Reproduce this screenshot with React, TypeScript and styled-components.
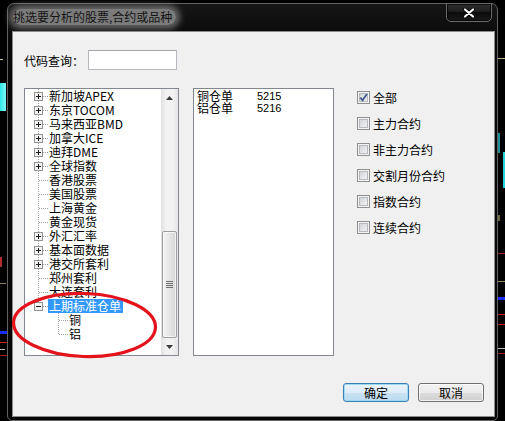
import styled, { createGlobalStyle } from "styled-components";

type Expander = "plus" | "minus" | null;

interface TreeItem {
  label: string;
  level: number;
  expander: Expander;
  selected?: boolean;
}

const treeItems: TreeItem[] = [
  { label: "新加坡APEX", level: 0, expander: "plus" },
  { label: "东京TOCOM", level: 0, expander: "plus" },
  { label: "马来西亚BMD", level: 0, expander: "plus" },
  { label: "加拿大ICE", level: 0, expander: "plus" },
  { label: "迪拜DME", level: 0, expander: "plus" },
  { label: "全球指数", level: 0, expander: "plus" },
  { label: "香港股票", level: 0, expander: null },
  { label: "美国股票", level: 0, expander: null },
  { label: "上海黄金", level: 0, expander: null },
  { label: "黄金现货", level: 0, expander: null },
  { label: "外汇汇率", level: 0, expander: "plus" },
  { label: "基本面数据", level: 0, expander: "plus" },
  { label: "港交所套利", level: 0, expander: "plus" },
  { label: "郑州套利", level: 0, expander: null },
  { label: "大连套利", level: 0, expander: null },
  { label: "上期标准仓单", level: 0, expander: "minus", selected: true },
  { label: "铜", level: 1, expander: null },
  { label: "铝", level: 1, expander: null },
];

const listItems = [
  { name: "铜仓单", code: "5215" },
  { name: "铝仓单", code: "5216" },
];

const options = [
  { label: "全部", checked: true },
  { label: "主力合约", checked: false },
  { label: "非主力合约", checked: false },
  { label: "交割月份合约", checked: false },
  { label: "指数合约", checked: false },
  { label: "连续合约", checked: false },
];

const GlobalStyle = createGlobalStyle`
  html, body {
    margin: 0;
    padding: 0;
    background: #000;
  }
  body {
    font-family: "Noto Sans CJK SC", "Liberation Sans", sans-serif;
    font-size: 12px;
  }
`;

const Page = styled.div`
  position: relative;
  display: flex;
  width: 505px;
  height: 421px;
  overflow: hidden;
  background: #000;
`;

const Strip = styled.div<{ $w: number }>`
  flex: none;
  width: ${p => p.$w}px;
  height: 421px;
  display: flex;
`;

const Frame = styled.div`
  flex: none;
  margin-top: 3px;
  width: 491px;
  height: 418px;
  box-sizing: border-box;
  border: 1px solid #626262;
  border-radius: 7px 7px 5px 5px;
  background: linear-gradient(#161616, #070707 40px, #050505);
  display: flex;
  flex-direction: column;
  padding: 0 2px 3px 4px;
`;

const TitleBar = styled.div`
  height: 27px;
  display: flex;
  align-items: flex-start;
  justify-content: space-between;
`;

const Title = styled.div`
  margin: 5px 0 0 1px;
  padding: 0 4px 0 0;
  height: 16px;
  font-size: 12px;
  line-height: 16px;
  color: #141414;
  white-space: nowrap;
  border-radius: 8px;
  background: rgba(150, 150, 150, 0.8);
  box-shadow: 0 0 6px 4px rgba(140, 140, 140, 0.7);
`;

const CloseButton = styled.div`
  margin-top: -1px;
  margin-right: 3px;
  width: 46px;
  height: 19px;
  box-sizing: border-box;
  border: 1px solid #6a6a6a;
  border-radius: 0 0 5px 5px;
  background: linear-gradient(#2e2e2e, #1c1c1c 50%, #0c0c0c 50%, #181818);
  box-shadow: inset 0 0 0 1px rgba(0, 0, 0, 0.7);
  display: flex;
  align-items: center;
  justify-content: center;
`;

const Client = styled.div`
  flex: 1;
  background: #f0f0f0;
  border: 1px solid #8c8c8c;
  display: flex;
  flex-direction: column;
  padding: 18px 10px 0 11px;
`;

const QueryRow = styled.div`
  display: flex;
  align-items: center;
  height: 20px;
`;

const QueryLabel = styled.span`
  width: 64px;
  font-size: 12px;
  color: #000;
`;

const QueryInput = styled.div`
  width: 89px;
  height: 20px;
  box-sizing: border-box;
  border: 1px solid #b5b8bf;
  border-top-color: #a3a6ad;
  background: #fff;
`;

const MainRow = styled.div`
  display: flex;
  margin-top: 18px;
  height: 268px;
`;

const TreeBox = styled.div`
  width: 155px;
  height: 268px;
  box-sizing: border-box;
  border: 1px solid #828790;
  background: #fff;
  display: flex;
`;

const TreeList = styled.div`
  flex: 1;
  overflow: hidden;
  padding-left: 3px;
`;

const TreeRow = styled.div`
  display: flex;
  align-items: center;
  height: 14px;
`;

const TreeLabel = styled.span<{ $selected: boolean }>`
  height: 14px;
  line-height: 14px;
  padding: 0 2px 0 1px;
  font-size: 12px;
  white-space: nowrap;
  color: ${p => (p.$selected ? "#fff" : "#000")};
  background: ${p => (p.$selected ? "#3399ff" : "transparent")};
`;

const ScrollBar = styled.div`
  width: 17px;
  display: flex;
  flex-direction: column;
  background: linear-gradient(90deg, #e2e2e2, #f2f2f2 30%, #f2f2f2 70%, #e6e6e6);
`;

const ScrollButton = styled.div`
  height: 17px;
  display: flex;
  align-items: center;
  justify-content: center;
`;

const ScrollTrack = styled.div`
  flex: 1;
`;

const Thumb = styled.div`
  height: 107px;
  margin: 0 1px;
  box-sizing: border-box;
  border: 1px solid #9d9d9d;
  border-radius: 2px;
  background: linear-gradient(90deg, #f3f3f3, #e6e6e6 50%, #d5d5d5);
  box-shadow: inset 0 0 0 1px rgba(255, 255, 255, 0.7);
  display: flex;
  align-items: center;
  justify-content: center;
`;

const ListBox = styled.div`
  margin-left: 14px;
  width: 141px;
  height: 268px;
  box-sizing: border-box;
  border: 1px solid #828790;
  background: #fff;
  padding: 1px 0 0 3px;
`;

const ListRow = styled.div`
  display: flex;
  height: 12px;
  line-height: 12px;
  color: #000;
`;

const ListName = styled.span`
  width: 60px;
  font-size: 12px;
`;

const ListCode = styled.span`
  font-family: "Liberation Sans", sans-serif;
  font-size: 11px;
`;

const Options = styled.div`
  margin-left: 23px;
  padding-top: 3px;
  display: flex;
  flex-direction: column;
`;

const Option = styled.div`
  display: flex;
  align-items: center;
  height: 13px;
  margin-bottom: 13px;
`;

const CheckOuter = styled.span`
  flex: none;
  width: 13px;
  height: 13px;
  box-sizing: border-box;
  border: 1px solid #8e8f8f;
  background: #f4f4f4;
  padding: 1px;
  display: flex;
`;

const CheckInner = styled.span`
  flex: 1;
  box-sizing: border-box;
  border: 1px solid #b6b9bd;
  background: linear-gradient(135deg, #d2d5d9, #f1f1f1);
  display: flex;
  align-items: center;
  justify-content: center;
`;

const OptionLabel = styled.span`
  margin-left: 3px;
  font-size: 12px;
  line-height: 13px;
  color: #000;
`;

const ButtonRow = styled.div`
  display: flex;
  justify-content: flex-end;
  gap: 9px;
  margin-top: 27px;
`;

const Button = styled.div<{ $default?: boolean }>`
  width: 66px;
  height: 19px;
  box-sizing: border-box;
  border-radius: 3px;
  border: 1px solid ${p => (p.$default ? "#3c7fb1" : "#707070")};
  background: ${p =>
    p.$default
      ? "linear-gradient(#eaf4fc 0%, #dcecf8 50%, #c9e2f4 50%, #bcdaf0 100%)"
      : "linear-gradient(#f2f2f2 0%, #ebebeb 50%, #dddddd 50%, #cfcfcf 100%)"};
  box-shadow: ${p =>
    p.$default ? "inset 0 0 0 1px rgba(150, 215, 245, 0.9)" : "inset 0 0 0 1px rgba(255, 255, 255, 0.75)"};
  display: flex;
  align-items: center;
  justify-content: center;
  font-size: 12px;
  color: #000;
`;

const Overlay = styled.svg`
  position: absolute;
  left: 0;
  top: 0;
  pointer-events: none;
`;

interface GuideProps {
  vert: "full" | "top" | "none";
  horiz: boolean;
  box: Expander;
}

const Guide = ({ vert, horiz, box }: GuideProps) => (
  <svg width="20" height="14" viewBox="0 0 20 14" shapeRendering="crispEdges" style={{ flex: "none" }}>
    {vert !== "none" && (
      <line x1="10.5" y1="0" x2="10.5" y2={vert === "full" ? 14 : 7} stroke="#a0a0a0" strokeDasharray="1 1" />
    )}
    {horiz && <line x1={box ? 15 : 11} y1="7.5" x2="20" y2="7.5" stroke="#a0a0a0" strokeDasharray="1 1" />}
    {box && (
      <g>
        <rect x="6.5" y="3.5" width="8" height="8" fill="#f3f3f3" stroke="#939393" />
        <line x1="8" y1="7.5" x2="13" y2="7.5" stroke="#1a1a1a" />
        {box === "plus" && <line x1="10.5" y1="5" x2="10.5" y2="10" stroke="#1a1a1a" />}
      </g>
    )}
  </svg>
);

const guidesFor = (item: TreeItem, index: number): GuideProps[] => {
  const next = treeItems[index + 1];
  if (item.level === 0) {
    const lastTop = !treeItems.slice(index + 1).some(t => t.level === 0);
    return [{ vert: lastTop ? "top" : "full", horiz: true, box: item.expander }];
  }
  const lastChild = !next || next.level < item.level;
  return [
    { vert: "none", horiz: false, box: null },
    { vert: lastChild ? "top" : "full", horiz: true, box: null },
  ];
};

const LeftChart = () => (
  <svg width="7" height="421" shapeRendering="crispEdges">
    <defs>
      <linearGradient id="cyanL" x1="0" x2="1">
        <stop offset="0" stopColor="#2fe8ea" />
        <stop offset="1" stopColor="#7ff6f6" />
      </linearGradient>
    </defs>
    <rect x="0" y="59" width="3" height="1" fill="#cfc7a0" />
    <rect x="0" y="83" width="6" height="28" fill="url(#cyanL)" />
    <rect x="0" y="257" width="2" height="10" fill="#b52a2a" />
    <rect x="0" y="283" width="6" height="1" fill="#8d8560" />
    <rect x="0" y="331" width="7" height="3" fill="#1a2cff" />
    <rect x="0" y="342" width="7" height="1" fill="#d21e1e" />
    <rect x="0" y="349" width="5" height="1" fill="#bbbbbb" />
    <rect x="0" y="355" width="7" height="1" fill="#b01818" />
  </svg>
);

const RightChart = () => (
  <svg width="7" height="421" shapeRendering="crispEdges">
    <rect x="0" y="58" width="7" height="1" fill="#b9b27c" />
    <rect x="0" y="133" width="2" height="20" fill="#1a8f95" />
    <rect x="5" y="152" width="2" height="36" fill="#25d4d8" />
    <rect x="0" y="215" width="2" height="6" fill="#6e6a40" />
    <rect x="0" y="253" width="7" height="1" fill="#a01c1c" />
    <rect x="0" y="281" width="7" height="1" fill="#8f8a5a" />
    <rect x="0" y="297" width="7" height="3" fill="#1a2cff" />
    <rect x="0" y="314" width="7" height="1" fill="#c21c1c" />
    <rect x="0" y="324" width="7" height="1" fill="#c21c1c" />
    <rect x="0" y="348" width="7" height="1" fill="#b5b5b5" />
    <rect x="0" y="353" width="7" height="1" fill="#a01818" />
  </svg>
);

export default function App() {
  return (
    <>
      <GlobalStyle />
      <Page>
        <Strip $w={7}>
          <LeftChart />
        </Strip>
        <Frame>
          <TitleBar>
            <Title>挑选要分析的股票,合约或品种</Title>
            <CloseButton>
              <svg width="12" height="10" viewBox="0 0 12 10">
                <path d="M2 1.5 L10 8.5 M10 1.5 L2 8.5" stroke="#000" strokeWidth="3.6" strokeLinecap="round" />
                <path d="M2 1.5 L10 8.5 M10 1.5 L2 8.5" stroke="#fff" strokeWidth="2.2" strokeLinecap="round" />
              </svg>
            </CloseButton>
          </TitleBar>
          <Client>
            <QueryRow>
              <QueryLabel>代码查询：</QueryLabel>
              <QueryInput />
            </QueryRow>
            <MainRow>
              <TreeBox>
                <TreeList>
                  {treeItems.map((item, i) => (
                    <TreeRow key={item.label}>
                      {guidesFor(item, i).map((g, j) => (
                        <Guide key={j} {...g} />
                      ))}
                      <TreeLabel $selected={!!item.selected}>{item.label}</TreeLabel>
                    </TreeRow>
                  ))}
                </TreeList>
                <ScrollBar>
                  <ScrollButton>
                    <svg width="7" height="4" viewBox="0 0 7 4">
                      <path d="M3.5 0 L7 4 L0 4 Z" fill="#3a3a3a" />
                    </svg>
                  </ScrollButton>
                  <ScrollTrack />
                  <Thumb>
                    <svg width="7" height="8" shapeRendering="crispEdges">
                      <rect x="0" y="0" width="7" height="1" fill="#6e6e6e" />
                      <rect x="0" y="2" width="7" height="1" fill="#6e6e6e" />
                      <rect x="0" y="4" width="7" height="1" fill="#6e6e6e" />
                      <rect x="0" y="6" width="7" height="1" fill="#6e6e6e" />
                    </svg>
                  </Thumb>
                  <ScrollButton>
                    <svg width="7" height="4" viewBox="0 0 7 4">
                      <path d="M0 0 L7 0 L3.5 4 Z" fill="#3a3a3a" />
                    </svg>
                  </ScrollButton>
                </ScrollBar>
              </TreeBox>
              <ListBox>
                {listItems.map(it => (
                  <ListRow key={it.code}>
                    <ListName>{it.name}</ListName>
                    <ListCode>{it.code}</ListCode>
                  </ListRow>
                ))}
              </ListBox>
              <Options>
                {options.map(o => (
                  <Option key={o.label}>
                    <CheckOuter>
                      <CheckInner>
                        {o.checked && (
                          <svg width="9" height="9" viewBox="0 0 9 9" style={{ margin: -1 }}>
                            <path d="M1.3 4.6 L3.6 7.3 L7.9 1" fill="none" stroke="#40598f" strokeWidth="1.7" />
                          </svg>
                        )}
                      </CheckInner>
                    </CheckOuter>
                    <OptionLabel>{o.label}</OptionLabel>
                  </Option>
                ))}
              </Options>
            </MainRow>
            <ButtonRow>
              <Button $default>确定</Button>
              <Button>取消</Button>
            </ButtonRow>
          </Client>
        </Frame>
        <Strip $w={7}>
          <RightChart />
        </Strip>
        <Overlay width="505" height="421">
          <ellipse
            cx="84.5"
            cy="325"
            rx="71"
            ry="31.5"
            transform="rotate(2 84.5 325)"
            fill="none"
            stroke="#e3121b"
            strokeWidth="3.2"
          />
        </Overlay>
      </Page>
    </>
  );
}
